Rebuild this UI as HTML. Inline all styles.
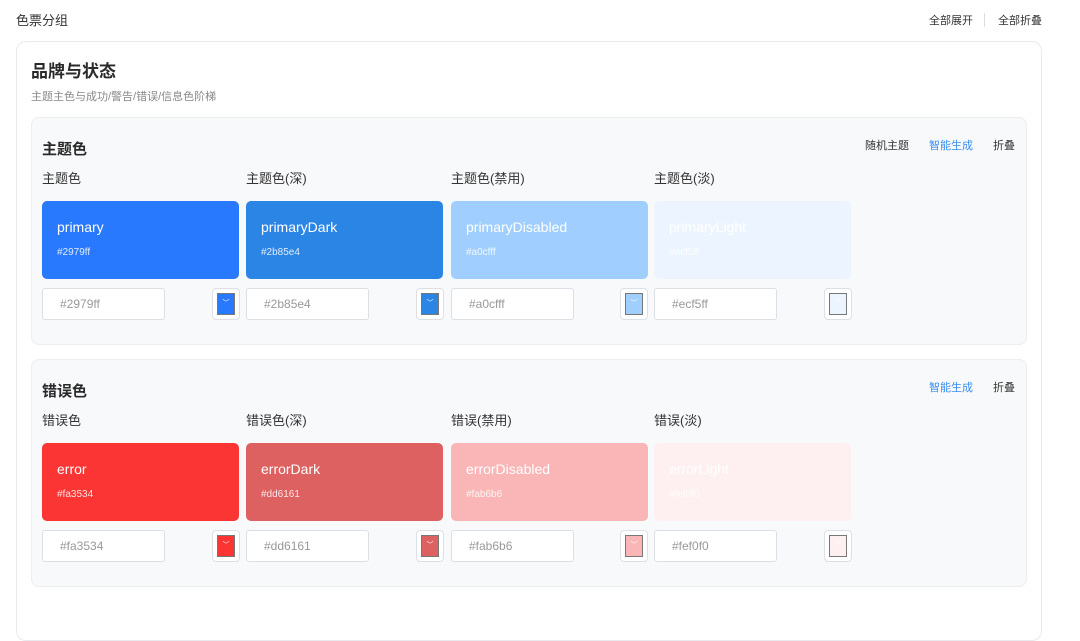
<!DOCTYPE html>
<html><head><meta charset="utf-8"><style>
*{margin:0;padding:0;box-sizing:border-box}
body{width:1080px;height:593px;overflow:hidden;background:#fff;font-family:"Liberation Sans","Noto Sans CJK SC",sans-serif;color:#333;position:relative}
.a{position:absolute}
.top{left:16px;top:10px;font-size:13px;color:#333}
.tr{top:12px;font-size:11px;color:#333}
.card{left:16px;top:41px;width:1026px;height:600px;border:1px solid #e8eaee;border-radius:10px;background:#fff}
.sec{left:31px;width:996px;height:228px;border:1px solid #eceef0;border-radius:8px;background:#f8f9fa}
.st{left:10px;top:20px;font-size:15px;font-weight:bold;color:#2a2a2a}
.lab{top:50px;font-size:13px;color:#333}
.sw{top:83px;width:197px;height:78px;border-radius:5px;color:#fff}
.sw b{position:absolute;left:15px;top:18px;font-size:14px;font-weight:normal}
.sw i{position:absolute;left:15px;top:46px;font-size:10px;font-style:normal;opacity:.85}
.in{top:170px;width:123px;height:32px;border:1px solid #dcdfe6;border-radius:3px;background:#fff;font-size:12px;color:#999;padding:8px 0 0 17px}
.pk{top:170px;width:28px;height:32px;border:1px solid #dcdfe6;border-radius:4px;background:#fff}
.pk span{position:absolute;left:4px;top:4px;width:18px;height:22px;border:1px solid #777;color:#fff;font-size:7px;text-align:center;line-height:20px}
.act{top:19px;font-size:11px}
</style></head><body>
<div class="a top">色票分组</div>
<div class="a tr" style="left:929px">全部展开</div>
<div class="a" style="left:984px;top:13px;width:1px;height:14px;background:#ddd"></div>
<div class="a tr" style="left:998px">全部折叠</div>
<div class="a card"></div>
<div class="a" style="left:31px;top:57px;font-size:17px;font-weight:bold;color:#2a2a2a">品牌与状态</div>
<div class="a" style="left:31px;top:88px;font-size:11px;color:#888">主题主色与成功/警告/错误/信息色阶梯</div>

<div class="a sec" style="top:117px">
<div class="a st">主题色</div>
<div class="a act" style="left:833px;color:#333">随机主题</div>
<div class="a act" style="left:897px;color:#3a8ef0">智能生成</div>
<div class="a act" style="left:961px;color:#333">折叠</div>
<div class="a lab" style="left:10px">主题色</div>
<div class="a lab" style="left:214px">主题色(深)</div>
<div class="a lab" style="left:419px">主题色(禁用)</div>
<div class="a lab" style="left:622px">主题色(淡)</div>
<div class="a sw" style="left:10px;background:#2979ff"><b>primary</b><i>#2979ff</i></div>
<div class="a sw" style="left:214px;background:#2b85e4"><b>primaryDark</b><i>#2b85e4</i></div>
<div class="a sw" style="left:419px;background:#a0cfff"><b>primaryDisabled</b><i>#a0cfff</i></div>
<div class="a sw" style="left:622px;background:#ecf5ff"><b>primaryLight</b><i>#ecf5ff</i></div>
<div class="a in" style="left:10px">#2979ff</div>
<div class="a pk" style="left:180px"><span style="background:#2979ff">﹀</span></div>
<div class="a in" style="left:214px">#2b85e4</div>
<div class="a pk" style="left:384px"><span style="background:#2b85e4">﹀</span></div>
<div class="a in" style="left:419px">#a0cfff</div>
<div class="a pk" style="left:588px"><span style="background:#a0cfff">﹀</span></div>
<div class="a in" style="left:622px">#ecf5ff</div>
<div class="a pk" style="left:792px"><span style="background:#ecf5ff">﹀</span></div>
</div>

<div class="a sec" style="top:359px">
<div class="a st">错误色</div>
<div class="a act" style="left:897px;color:#3a8ef0">智能生成</div>
<div class="a act" style="left:961px;color:#333">折叠</div>
<div class="a lab" style="left:10px">错误色</div>
<div class="a lab" style="left:214px">错误色(深)</div>
<div class="a lab" style="left:419px">错误(禁用)</div>
<div class="a lab" style="left:622px">错误(淡)</div>
<div class="a sw" style="left:10px;background:#fa3534"><b>error</b><i>#fa3534</i></div>
<div class="a sw" style="left:214px;background:#dd6161"><b>errorDark</b><i>#dd6161</i></div>
<div class="a sw" style="left:419px;background:#fab6b6"><b>errorDisabled</b><i>#fab6b6</i></div>
<div class="a sw" style="left:622px;background:#fef0f0"><b>errorLight</b><i>#fef0f0</i></div>
<div class="a in" style="left:10px">#fa3534</div>
<div class="a pk" style="left:180px"><span style="background:#fa3534">﹀</span></div>
<div class="a in" style="left:214px">#dd6161</div>
<div class="a pk" style="left:384px"><span style="background:#dd6161">﹀</span></div>
<div class="a in" style="left:419px">#fab6b6</div>
<div class="a pk" style="left:588px"><span style="background:#fab6b6">﹀</span></div>
<div class="a in" style="left:622px">#fef0f0</div>
<div class="a pk" style="left:792px"><span style="background:#fef0f0">﹀</span></div>
</div>
</body></html>
